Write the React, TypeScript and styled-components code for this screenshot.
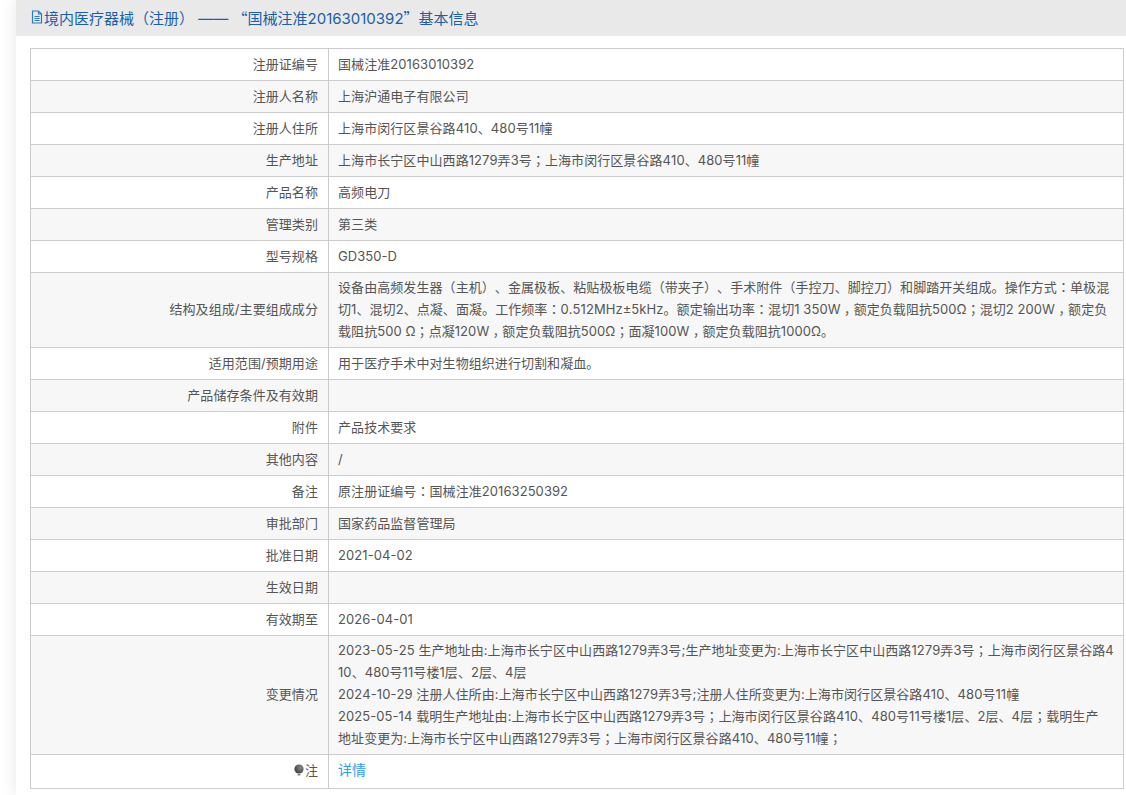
import React from "react";
import styled, { createGlobalStyle } from "styled-components";

const Global = createGlobalStyle`
  html, body { margin: 0; padding: 0; background: #fff; }
  body { font-family: "Inter", "Noto Sans CJK SC", sans-serif; font-size: 13px; color: #555; text-spacing-trim: space-all; font-kerning: none; letter-spacing: 0.07px; }
`;
const Page = styled.div`
  margin-left: 16px;
  height: 795px;
  overflow: hidden;
  box-shadow: 0 0 16px rgba(0, 0, 0, 0.1);
  background: #fff;
`;
const Header = styled.div`
  height: 36px;
  box-sizing: border-box;
  padding: 0 0 2px 14px;
  background: #e9e9e9;
  display: flex;
  align-items: center;
  font-size: 15px;
  color: #1a5fa8;
  white-space: pre;
  letter-spacing: 0;
`;
const DocIcon = styled.svg`
  width: 14px;
  height: 14px;
  flex: none;
`;
const Body = styled.div`
  padding: 12px 2px 0 14px;
`;
const Table = styled.table`
  width: 100%;
  border-collapse: separate;
  border-spacing: 0;
  border: 1px solid #ccc;
  table-layout: fixed;
`;
const Row = styled.tr<{ $alt: boolean }>`
  background: ${(p) => (p.$alt ? "#f7f7f7" : "#fff")};
  &:last-child td {
    border-bottom: none;
    height: 33px;
    padding-top: 2px;
    padding-bottom: 6px;
  }
`;
const Label = styled.td`
  width: 297px;
  box-sizing: border-box;
  height: 32px;
  border-bottom: 1px solid #ccc;
  padding: 3px 10px 5px 4px;
  text-align: right;
  line-height: 22px;
`;
const Value = styled.td`
  box-sizing: border-box;
  border-bottom: 1px solid #ccc;
  border-left: 1px solid #ccc;
  padding: 3px 9px 5px 9px;
  line-height: 22px;
  word-break: break-all;
`;
const Link = styled.a`
  color: #2e9bff;
  font-size: 14px;
`;
const Bulb = styled.svg`
  width: 12px;
  height: 13px;
  vertical-align: -2px;
`;
const Centered = styled.span`
  font-family: "Noto Sans CJK TC", sans-serif;
`;
const Comma = styled(Centered)`
  display: inline-block;
  transform: translateY(0.28em);
`;
const Wide = styled.span`
  font-family: "Noto Sans CJK SC", sans-serif;
`;

function Text({ value }: { value: string }) {
  const parts = value.split(/([，；：（）\n])/);
  return (
    <>
      {parts.map((part, i) => {
        if (part === "\n") return <br key={i} />;
        if (part === "，") return <Comma key={i}>{part}</Comma>;
        if (part === "；" || part === "：" || part === "（" || part === "）") return <Centered key={i}>{part}</Centered>;
        return <React.Fragment key={i}>{part}</React.Fragment>;
      })}
    </>
  );
}

const rows: [string, string][] = [
  ["注册证编号", "国械注准20163010392"],
  ["注册人名称", "上海沪通电子有限公司"],
  ["注册人住所", "上海市闵行区景谷路410、480号11幢"],
  ["生产地址", "上海市长宁区中山西路1279弄3号；上海市闵行区景谷路410、480号11幢"],
  ["产品名称", "高频电刀"],
  ["管理类别", "第三类"],
  ["型号规格", "GD350-D"],
  ["结构及组成/主要组成成分", "设备由高频发生器（主机）、金属极板、粘贴极板电缆（带夹子）、手术附件（手控刀、脚控刀）和脚踏开关组成。操作方式：单极混\n切1、混切2、点凝、面凝。工作频率：0.512MHz±5kHz。额定输出功率：混切1 350W，额定负载阻抗500Ω；混切2 200W，额定负\n载阻抗500 Ω；点凝120W，额定负载阻抗500Ω；面凝100W，额定负载阻抗1000Ω。"],
  ["适用范围/预期用途", "用于医疗手术中对生物组织进行切割和凝血。"],
  ["产品储存条件及有效期", ""],
  ["附件", "产品技术要求"],
  ["其他内容", "/"],
  ["备注", "原注册证编号：国械注准20163250392"],
  ["审批部门", "国家药品监督管理局"],
  ["批准日期", "2021-04-02"],
  ["生效日期", ""],
  ["有效期至", "2026-04-01"],
  ["变更情况", "2023-05-25 生产地址由:上海市长宁区中山西路1279弄3号;生产地址变更为:上海市长宁区中山西路1279弄3号；上海市闵行区景谷路4\n10、480号11号楼1层、2层、4层\n2024-10-29 注册人住所由:上海市长宁区中山西路1279弄3号;注册人住所变更为:上海市闵行区景谷路410、480号11幢\n2025-05-14 载明生产地址由:上海市长宁区中山西路1279弄3号；上海市闵行区景谷路410、480号11号楼1层、2层、4层；载明生产\n地址变更为:上海市长宁区中山西路1279弄3号；上海市闵行区景谷路410、480号11幢；"],
];

export default function App() {
  return (
    <Page>
      <Global />
      <Header>
        <DocIcon viewBox="0 0 14 14" fill="none" stroke="#2a78c8" strokeWidth="1.2">
          <path d="M2.5 1h6l3 3v9h-9z" />
          <path d="M8.5 1v3h3M4.5 6.5h5M4.5 8.5h5M4.5 10.5h5" />
        </DocIcon>
        <span>
          境内医疗器械<Centered>（</Centered>注册<Centered>）</Centered> —— <Wide>“</Wide>国械注准20163010392<Wide>”</Wide>基本信息
        </span>
      </Header>
      <Body>
        <Table>
          <tbody>
            {rows.map(([k, v], i) => (
              <Row key={k} $alt={i % 2 === 1}>
                <Label>{k}</Label>
                <Value><Text value={v} /></Value>
              </Row>
            ))}
            <Row $alt={false}>
              <Label>
                <Bulb viewBox="0 0 12 13">
                  <defs>
                    <radialGradient id="bulbShade" cx="0.65" cy="0.35" r="0.8">
                      <stop offset="0" stopColor="#888" />
                      <stop offset="1" stopColor="#333" />
                    </radialGradient>
                  </defs>
                  <circle cx="6" cy="5" r="4.6" fill="url(#bulbShade)" />
                  <path d="M4.5 10h3v1.5h-3z" fill="#888" />
                </Bulb>
                注
              </Label>
              <Value><Link>详情</Link></Value>
            </Row>
          </tbody>
        </Table>
      </Body>
    </Page>
  );
}
